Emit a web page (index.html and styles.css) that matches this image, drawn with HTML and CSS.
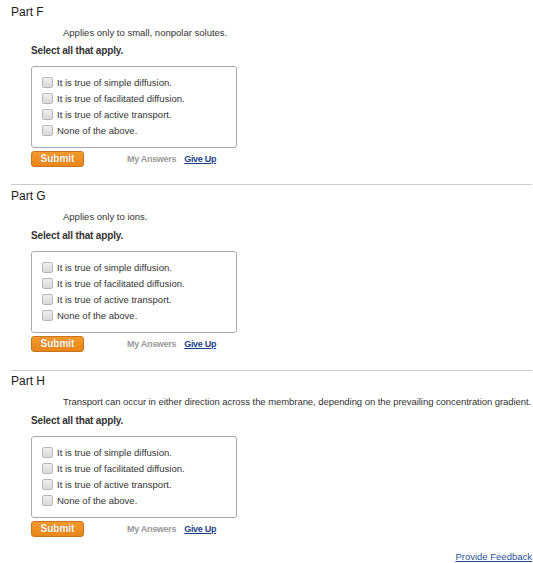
FILE: index.html
```html
<!DOCTYPE html>
<html>
<head>
<meta charset="utf-8">
<link rel="stylesheet" href="styles.css">
</head>
<body>
<div class="page">
  <section class="part">
    <h2 class="part-title">Part F</h2>
    <p class="prompt">Applies only to small, nonpolar solutes.</p>
    <p class="instr">Select all that apply.</p>
    <div class="choices">
      <label class="choice"><span class="box"></span>It is true of simple diffusion.</label>
      <label class="choice"><span class="box"></span>It is true of facilitated diffusion.</label>
      <label class="choice"><span class="box"></span>It is true of active transport.</label>
      <label class="choice"><span class="box"></span>None of the above.</label>
    </div>
    <div class="actions">
      <span class="submit">Submit</span>
      <span class="my-answers">My Answers</span>
      <a class="give-up" href="#">Give Up</a>
    </div>
  </section>
  <section class="part mid">
    <h2 class="part-title">Part G</h2>
    <p class="prompt">Applies only to ions.</p>
    <p class="instr">Select all that apply.</p>
    <div class="choices">
      <label class="choice"><span class="box"></span>It is true of simple diffusion.</label>
      <label class="choice"><span class="box"></span>It is true of facilitated diffusion.</label>
      <label class="choice"><span class="box"></span>It is true of active transport.</label>
      <label class="choice"><span class="box"></span>None of the above.</label>
    </div>
    <div class="actions">
      <span class="submit">Submit</span>
      <span class="my-answers">My Answers</span>
      <a class="give-up" href="#">Give Up</a>
    </div>
  </section>
  <section class="part last">
    <h2 class="part-title">Part H</h2>
    <p class="prompt long">Transport can occur in either direction across the membrane, depending on the prevailing concentration gradient.</p>
    <p class="instr">Select all that apply.</p>
    <div class="choices">
      <label class="choice"><span class="box"></span>It is true of simple diffusion.</label>
      <label class="choice"><span class="box"></span>It is true of facilitated diffusion.</label>
      <label class="choice"><span class="box"></span>It is true of active transport.</label>
      <label class="choice"><span class="box"></span>None of the above.</label>
    </div>
    <div class="actions">
      <span class="submit">Submit</span>
      <span class="my-answers">My Answers</span>
      <a class="give-up" href="#">Give Up</a>
    </div>
  </section>
  <div class="feedback"><a href="#">Provide Feedback</a></div>
</div>
</body>
</html>
```
FILE: styles.css
```css
html, body {
  margin: 0;
  padding: 0;
  background: #fff;
}
body {
  font-family: "Liberation Sans", Arial, sans-serif;
  font-size: 9.5px;
  color: #333;
}
.page {
  padding: 1px 1px 0 11px;
}
.part {
  padding: 4px 0 17px;
}
.part + .part {
  border-top: 1px solid #cccccc;
}
.part + .part .instr {
  margin-top: 5px;
}
.part.mid {
  padding-bottom: 18px;
}
.part.last {
  padding-top: 3px;
  padding-bottom: 14px;
}
.part-title {
  margin: 0;
  font-size: 12px;
  line-height: 14px;
  font-weight: normal;
  color: #1a1a1a;
}
.prompt {
  margin: 7px 0 0 52px;
  line-height: 14px;
  color: #333;
  white-space: nowrap;
}
.prompt.long {
  letter-spacing: -0.06px;
}
.instr {
  margin: 4px 0 0 20px;
  line-height: 14px;
  font-size: 10px;
  letter-spacing: -0.15px;
  font-weight: bold;
  color: #333;
}
.choices {
  margin: 8px 0 0 20px;
  width: 206px;
  border: 1px solid #aaaaaa;
  border-radius: 3px;
  padding: 7px 0 8px 10px;
  box-sizing: border-box;
  height: 82px;
}
.choice {
  display: flex;
  align-items: center;
  height: 16px;
  color: #333;
}
.box {
  width: 9px;
  height: 9px;
  border: 1px solid #b8b8b8;
  border-radius: 2px;
  background: linear-gradient(#f0f0f0, #d8d8d8);
  margin-right: 4px;
  flex: none;
}
.actions {
  margin: 3px 0 0 20px;
  display: flex;
  align-items: center;
  height: 16px;
}
.submit {
  box-sizing: border-box;
  width: 53px;
  height: 16px;
  line-height: 14px;
  text-align: center;
  font-size: 10px;
  background: linear-gradient(#f39a2c, #e9861a);
  border: 1px solid #c9741a;
  border-radius: 3px;
  color: #fff;
  font-weight: bold;
  text-shadow: 0 0 1px #a85a0a;
}
.my-answers {
  margin-left: 43px;
  font-size: 9px;
  letter-spacing: -0.3px;
  color: #999;
  font-weight: bold;
}
.give-up {
  margin-left: 8px;
  font-size: 9px;
  letter-spacing: -0.3px;
  color: #1d3f8a;
  font-weight: bold;
  text-decoration: underline;
}
.feedback {
  text-align: right;
  line-height: 12px;
}
.feedback a {
  color: #2a4f9c;
  text-decoration: underline;
}
```
